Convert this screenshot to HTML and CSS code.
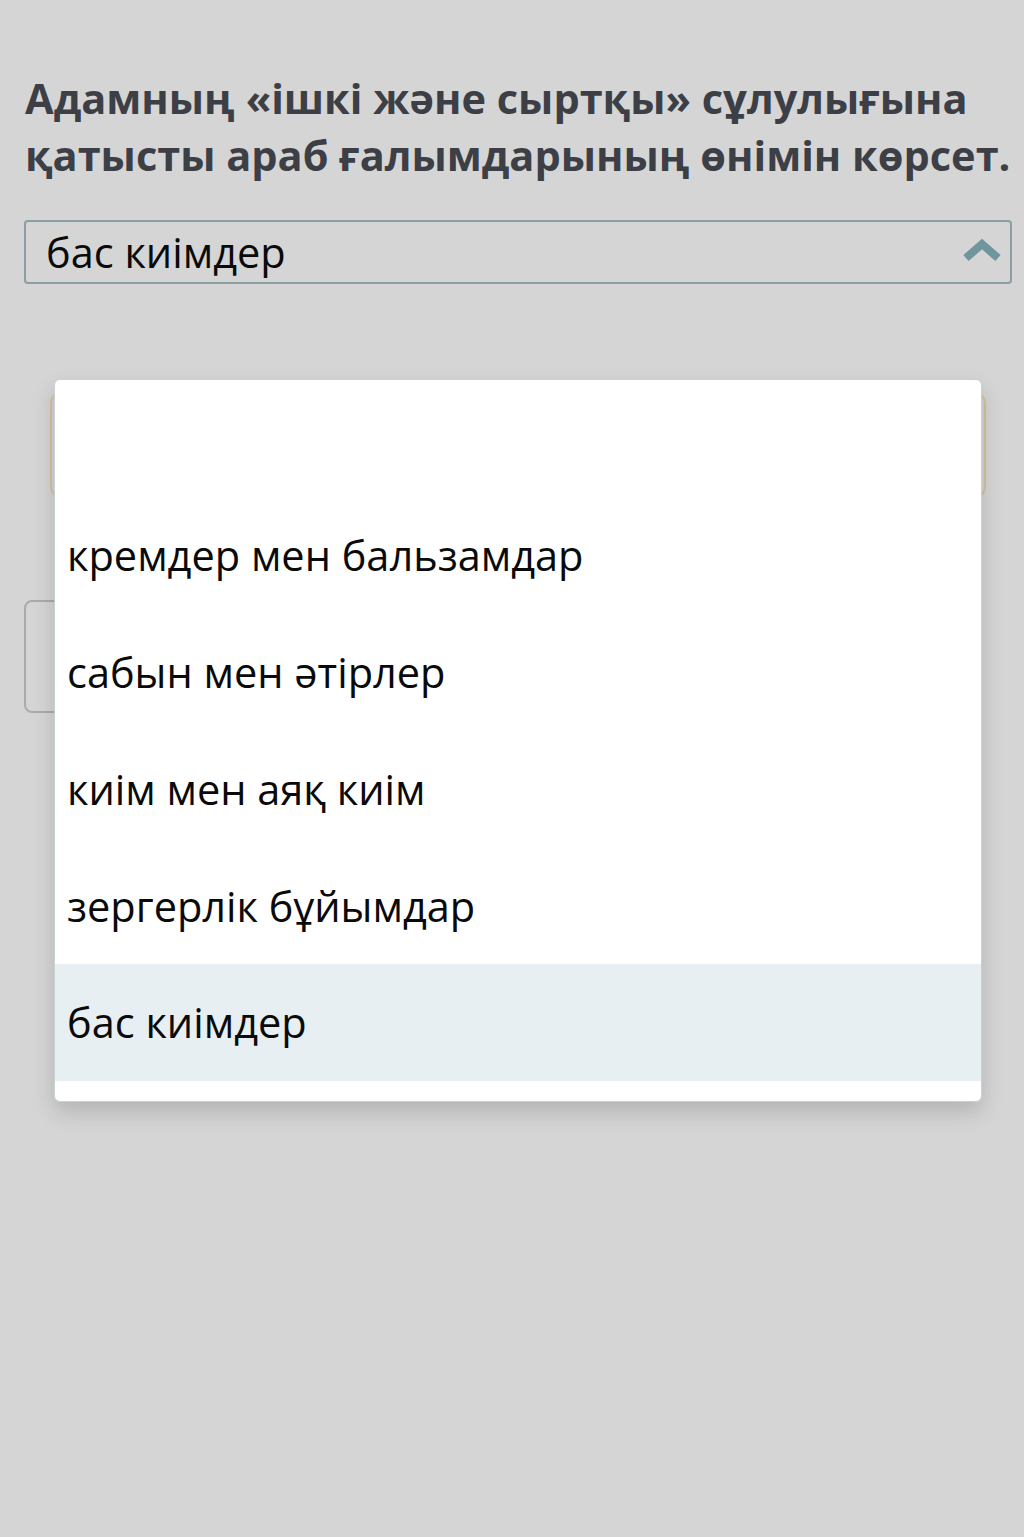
FILE: index.html
```html
<!DOCTYPE html>
<html lang="kk">
<head>
    <meta charset="UTF-8">
    <meta name="viewport" content="width=device-width, initial-scale=1.0">
    <title>Сұрақ</title>
    <link rel="stylesheet" href="styles.css">
</head>
<body>
    <div class="container">
        <h1>Адамның «ішкі және сыртқы» сұлулығына қатысты араб ғалымдарының өнімін көрсет.</h1>

        <div class="select-wrap">
            <div class="select">
                <span class="select-value">бас киімдер</span>
                <svg class="chevron" width="40" height="26" viewBox="0 0 40 26">
                    <path d="M4 21 L20 7 L36 21" fill="none" stroke="#6e969c" stroke-width="8" stroke-linejoin="miter"/>
                </svg>
            </div>

            <div class="answer-area">
                <div class="drop-zone"></div>
                <div class="answer-box"></div>
            </div>

            <ul class="dropdown">
                <li class="option empty"></li>
                <li class="option">кремдер мен бальзамдар</li>
                <li class="option">сабын мен әтірлер</li>
                <li class="option">киім мен аяқ киім</li>
                <li class="option">зергерлік бұйымдар</li>
                <li class="option selected">бас киімдер</li>
            </ul>
        </div>
    </div>
</body>
</html>
```

FILE: styles.css
```css
html,
body {
    min-height: 100%;
}

body {
    font-family: "Open Sans", "Noto Sans", sans-serif;
    background-color: #d5d5d5;
    margin: 0;
    padding: 0;
}

.container {
    min-height: 1537px;
    box-sizing: border-box;
    padding: 70px 12px 0 24px;
}

h1 {
    margin: 0 0 36px 1px;
    font-size: 41.5px;
    font-weight: bold;
    line-height: 57px;
    color: #3c4046;
}

.select-wrap {
    position: relative;
}

.select {
    display: flex;
    align-items: center;
    justify-content: space-between;
    height: 60px;
    padding: 0 8px 0 20px;
    border: 2px solid #8a9fa4;
    border-radius: 4px;
}

.select-value {
    font-size: 41.5px;
    color: #0a0a0a;
}

.chevron {
    margin-top: -4px;
}

.answer-area {
    padding-top: 106px;
}

.drop-zone {
    margin: 0 26px 0 26px;
    height: 106px;
    border: 2px solid #d6c29e;
    border-radius: 14px;
}

.answer-box {
    margin-top: 100px;
    width: 80px;
    height: 109px;
    border: 2px solid #a9acad;
    border-radius: 8px;
}

.dropdown {
    position: absolute;
    top: 159px;
    left: 30px;
    right: 30px;
    margin: 0;
    padding: 0 0 20px 0;
    list-style: none;
    background-color: #fff;
    border: 1px solid #c8d2d3;
    border-radius: 6px;
    box-shadow: 0 10px 22px rgba(0, 0, 0, 0.16);
}

.option {
    height: 116.8px;
    display: flex;
    align-items: center;
    padding-left: 12px;
    font-size: 41.5px;
    color: #0a0a0a;
}

.option.selected {
    background-color: #e8eff2;
}
```
